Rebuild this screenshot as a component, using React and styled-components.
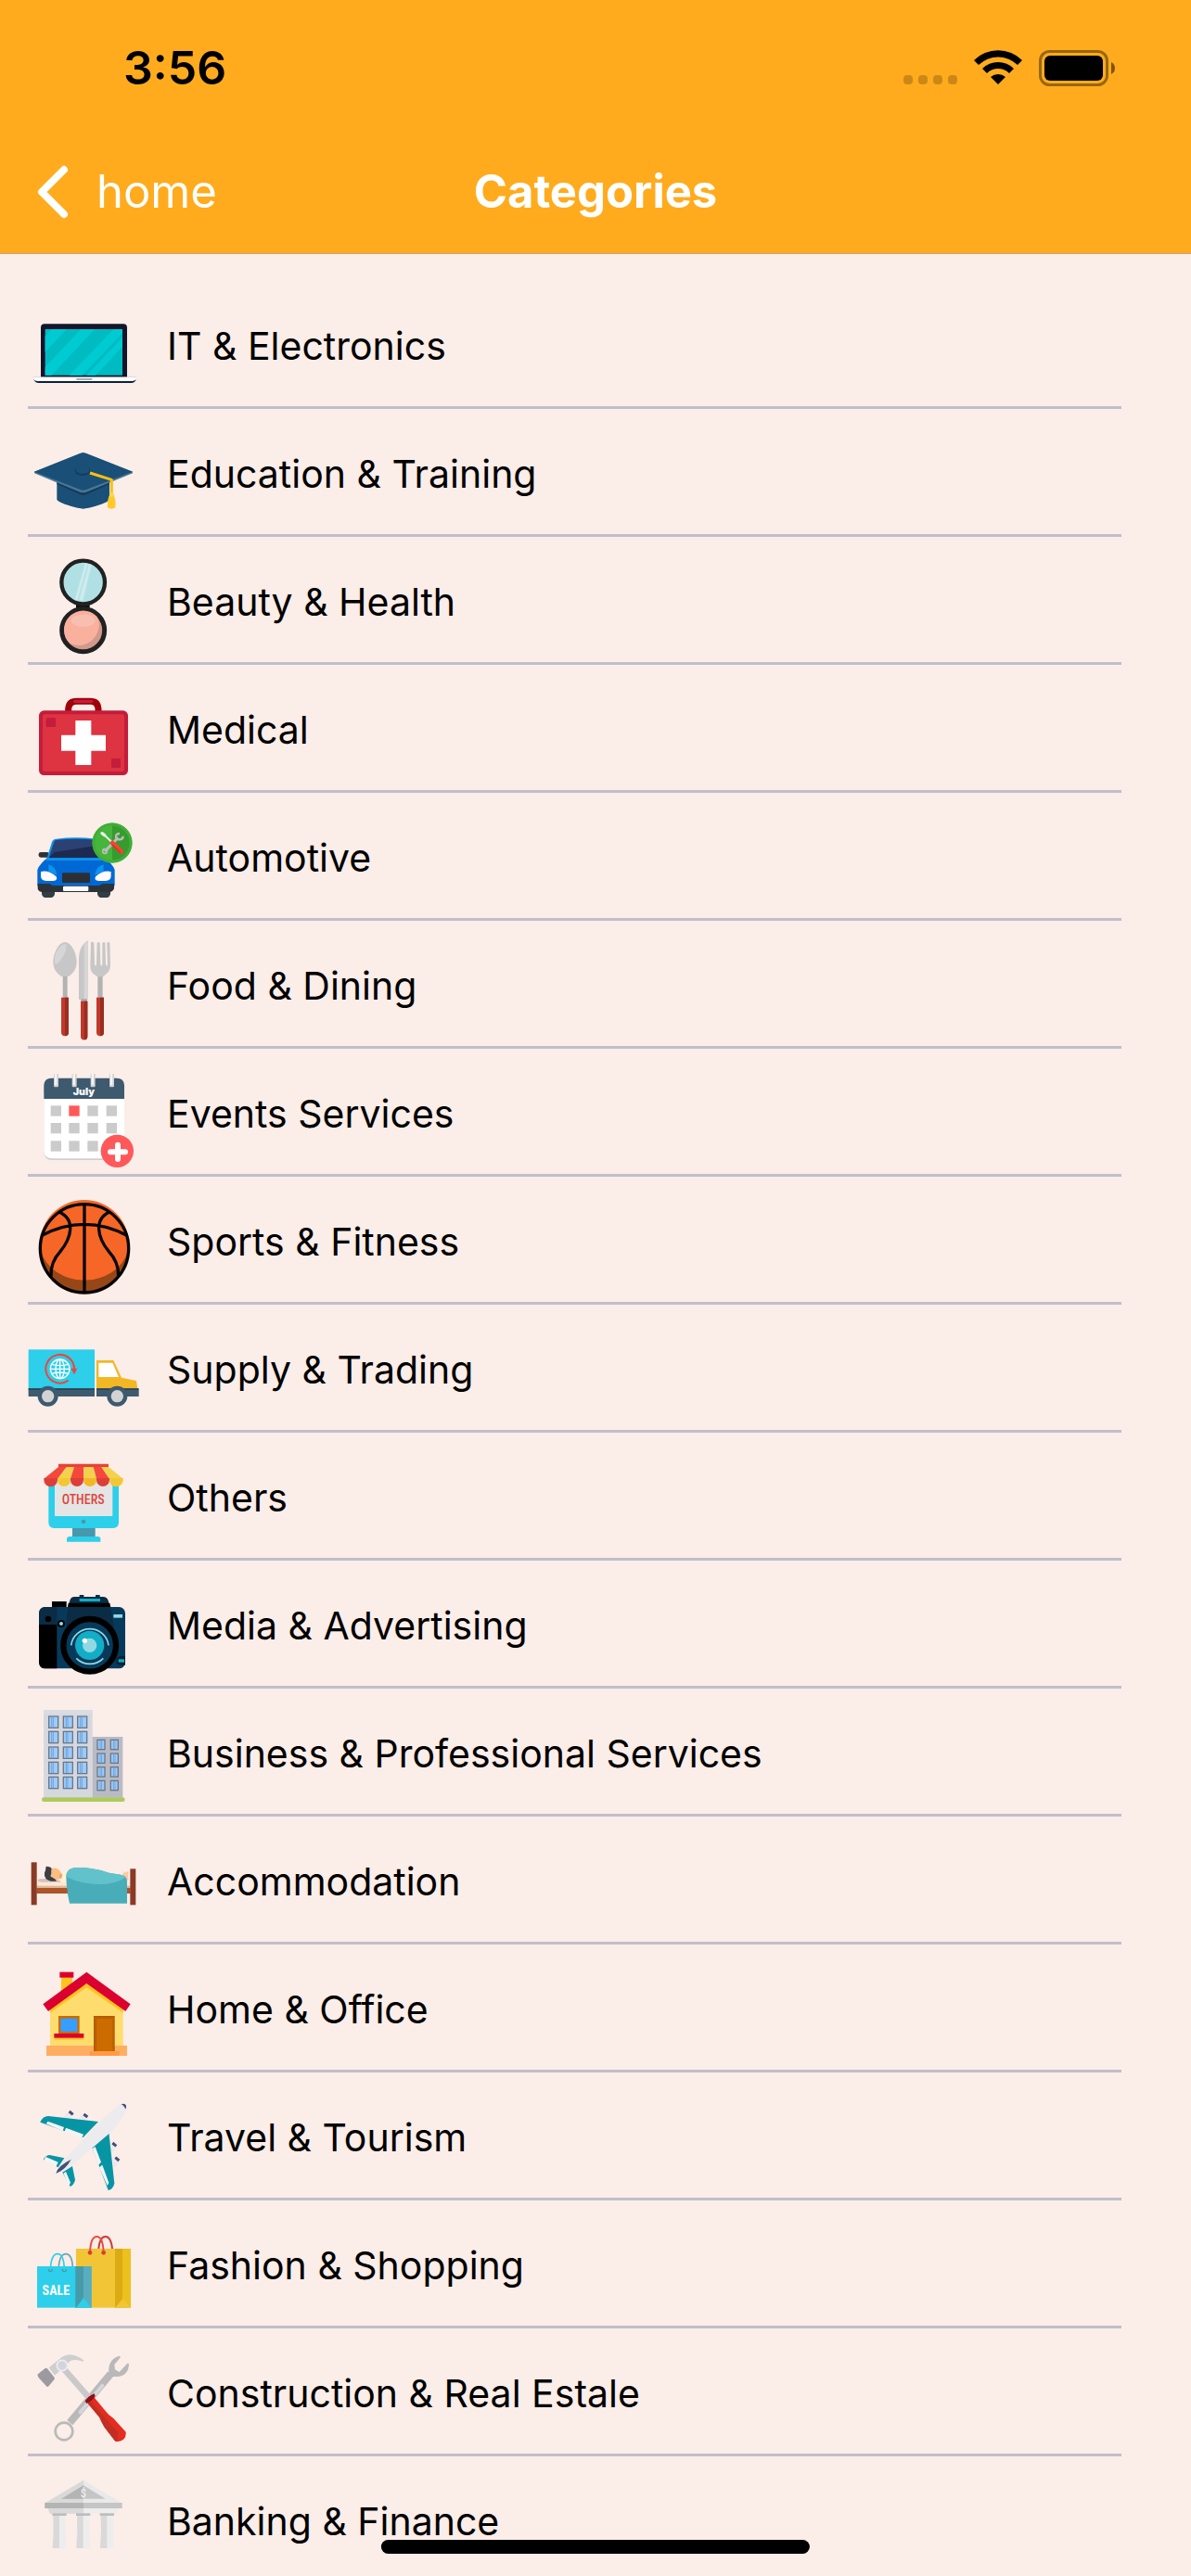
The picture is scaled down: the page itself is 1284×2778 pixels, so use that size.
import React from 'react';
import styled, { createGlobalStyle } from 'styled-components';

function LaptopIcon() {
  return (
    <Icon viewBox="90 -6 360 360">
      <path d="M132 262V100q0-12 12-12h255q12 0 12 12v162z" fill="#15142b" />
      <rect x="146" y="105" width="250" height="149" fill="#00bcc2" />
      <path d="M166 105h49l-69 74v-51zM262 105h44L167 254h-21v-26zM368 105h28v13L266 254h-42zM396 132v29l-87 93h-29z" fill="#00cbd3" />
      <path d="M109 268q4 11 17 11h298q13 0 16-11z" fill="#0b2238" />
      <path d="M109 260h331v7q-4 6-14 6H122q-10 0-13-6z" fill="#fff" />
      <path d="M109 260h331" stroke="#c5ccd2" strokeWidth="2" />
      <rect x="247" y="264" width="51" height="6" fill="#a3b3b6" />
    </Icon>
  );
}

function GraduationIcon() {
  return (
    <Icon viewBox="90 408 360 360">
      <path d="M184 596v60q4 8 40 20 32 10 45 10t45-10q36-12 40-20v-60z" fill="#1a4f77" />
      <path d="M184 596v10l76 34q9 4 18 0l76-34v-10z" fill="#123a57" />
      <path d="M111 566l148-59q10-5 20 0l150 59v5l-150 61q-10 4-20 0l-148-61z" fill="#4a7696" />
      <path d="M111 566l148-59q10-5 20 0l150 59-150 58q-10 4-20 0z" fill="#1a4f77" />
      <ellipse cx="267" cy="563" rx="25" ry="15" fill="#123a57" />
      <ellipse cx="267" cy="560" rx="23" ry="13" fill="#1a4f77" />
      <path d="M291 570l70 22v48" fill="none" stroke="#fdc010" strokeWidth="9" strokeLinejoin="round" />
      <path d="M355 638h12q8 20 6 44-12 8-25 0-2-24 7-44z" fill="#ffca28" />
      <circle cx="361" cy="641" r="7" fill="#ffd54f" />
    </Icon>
  );
}

function CompactIcon() {
  return (
    <Icon viewBox="90 12 360 360">
      <rect x="246" y="176" width="44" height="30" fill="#111" />
      <circle cx="269" cy="114" r="70" fill="#b0e0e4" stroke="#212121" strokeWidth="13" />
      <path d="M276 52l20 6-28 116-26-4z" fill="#cdebed" />
      <path d="M285 56l-32 116" stroke="#b0e0e4" strokeWidth="4" />
      <circle cx="269" cy="269" r="69" fill="#d09a8c" stroke="#212121" strokeWidth="15" />
      <path d="M207 268a62 62 0 0 1 106-44q14 20 4 48-14 38-54 46-24 2-38-8-18-18-18-42z" fill="#f9b09d" />
      <ellipse cx="269" cy="238" rx="39" ry="20" fill="#f8bfb0" />
    </Icon>
  );
}

function FirstAidIcon() {
  return (
    <Icon viewBox="90 426 360 360">
      <path d="M221 532v-8q2-25 26-25h46q23 0 25 25v8" fill="none" stroke="#a00007" strokeWidth="21" />
      <rect x="237" y="494" width="64" height="10" rx="5" fill="#c41c3b" />
      <rect x="126" y="529" width="288" height="209" rx="16" fill="#c41c3b" />
      <rect x="138" y="541" width="264" height="185" rx="8" fill="#de3341" />
      <rect x="149" y="552" width="31" height="30" rx="4" fill="#c41c3b" />
      <rect x="360" y="684" width="30" height="30" rx="4" fill="#c41c3b" />
      <path d="M244 561h51v47h47v51h-47v46h-51v-46h-46v-51h46z" fill="#fff" />
    </Icon>
  );
}

function CarIcon() {
  return (
    <Icon viewBox="90 30 360 360">
      <rect x="125" y="177" width="34" height="17" rx="7" fill="#2b3338" />
      <path d="M135 298h42v15q-3 11-12 11h-18q-9 0-12-11zM315 298h42v15q-3 11-12 11h-18q-9 0-12-11z" fill="#343c44" />
      <path d="M150 202l18-58q3-9 14-10 64-8 128 0 11 1 14 10l18 58z" fill="#0a94ee" />
      <path d="M158 195l17-52q1-5 9-6 62-6 124 0 8 1 9 6l17 52z" fill="#2c4173" />
      <path d="M158 195l18-18 140-22 18 40z" fill="#1d2a50" />
      <path d="M153 196h186q24 18 32 38v52H121v-52q8-20 32-38z" fill="#0068d4" />
      <path d="M153 196h186l8 8H145z" fill="#0a94ee" />
      <path d="M157 217q24 6 27 34l-27-12zM335 217q-24 6-29 34l29-10z" fill="#0a94ee" />
      <path d="M132 240q26-6 50 16 6 13-10 14h-22q-18-2-18-16zM359 240q-26-6-50 16-6 13 10 14h22q18-2 18-16z" fill="#fffaff" />
      <rect x="201" y="244" width="90" height="32" rx="4" fill="#2b2f33" />
      <path d="M122 279h38q8 6 14 6h144q6 0 14-6h37v16q-4 11-16 11H138q-14 0-16-11z" fill="#2b3338" />
      <rect x="204" y="287" width="82" height="16" rx="3" fill="#fffaff" />
      <circle cx="363" cy="147" r="65" fill="#45b53c" />
      <path d="M363 91a56 56 0 0 1 0 112z" fill="#379b2f" />
      <circle cx="363" cy="147" r="60" fill="none" stroke="#3fae36" strokeWidth="8" />
      <path d="M339 175l43-45" stroke="#bdbdbd" strokeWidth="9" />
      <circle cx="339" cy="174" r="7" fill="none" stroke="#bdbdbd" strokeWidth="5" />
      <path d="M387 117q-13 0-12 11 2 9 13 8 10-1 10-11" fill="none" stroke="#bdbdbd" strokeWidth="7" />
      <path d="M331 117l6 4 28 27" fill="none" stroke="#eee" strokeWidth="6" strokeLinecap="round" />
      <path d="M330 116l8 6" stroke="#eee" strokeWidth="10" strokeLinecap="round" />
      <path d="M363 147l30 29" stroke="#ff4236" strokeWidth="14" strokeLinecap="round" />
      <path d="M363 153l26 25" stroke="#d62e22" strokeWidth="4" strokeLinecap="round" />
    </Icon>
  );
}

function CutleryIcon() {
  return (
    <Icon viewBox="90 444 360 360">
      <rect x="203" y="570" width="15" height="82" fill="#b3b3b3" />
      <path d="M210 468c20 0 38 36 38 64 0 26-14 38-26 47h-24c-12-9-26-21-26-47 0-28 18-64 38-64z" fill="#c7c7c7" />
      <path d="M212 474c8 12-8 54-32 66-12-24 10-64 32-66z" fill="#d6d6d6" />
      <path d="M255 654V520q2-44 30-57v191z" fill="#c7c7c7" />
      <path d="M272 654V474q6-7 13-11v191z" fill="#d6d6d6" />
      <rect x="262" y="652" width="20" height="8" fill="#a8a8a8" />
      <rect x="316" y="570" width="16" height="82" fill="#b3b3b3" />
      <path d="M294 468q8-3 10 3l2 70q3 8 6 0l2-70q5-6 9 0l2 70q3 8 6 0v-70q5-6 9 0l2 70q3 8 6 0l-2-70q4-6 9-1l2 75q-2 18-16 28l-8 7h-18l-9-7q-14-8-14-28z" fill="#c7c7c7" />
      <path d="M198 647h24v113q0 12-12 12t-12-12zM312 647h24v113q0 12-12 12t-12-12zM261 659h22v114q0 11-11 11t-11-11z" fill="#c0392b" />
      <path d="M210 647h12v113q0 12-12 12zM324 647h12v113q0 12-12 12zM272 659h11v114q0 11-11 11z" fill="#992d22" />
    </Icon>
  );
}

function CalendarIcon() {
  const columns = [164, 223, 283, 344];
  const rows = [187, 243, 301];
  return (
    <Icon viewBox="90 48 360 360">
      <rect x="142" y="110" width="260" height="253" rx="24" fill="#cfcfcf" />
      <path d="M142 150h260v186q-2 22-24 22H168q-24 0-26-22z" fill="#fff" />
      <path d="M142 165v-45q2-22 24-22h212q22 0 24 22v45z" fill="#3d5a6f" />
      {columns.map((x) => (
        <g key={x}>
          <rect x={x + 10} y="84" width="15" height="43" rx="3" fill="#d0d0d0" />
          <rect x={x + 13} y="84" width="7" height="37" fill="#f5f5f5" />
        </g>
      ))}
      <MonthText x="271" y="154">July</MonthText>
      {rows.map((y) =>
        columns.map((x) => (
          <rect key={x + '-' + y} x={x} y={y} width="34" height="34" fill={x === 223 && y === 187 ? '#ff585b' : '#cbcbcb'} />
        ))
      )}
      <circle cx="379" cy="334" r="53" fill="#ff585b" />
      <path d="M381 314v46M357 337h48" stroke="#fff" strokeWidth="18" strokeLinecap="round" />
    </Icon>
  );
}

function BasketballIcon() {
  return (
    <Icon viewBox="90 462 360 360">
      <circle cx="273" cy="649" r="144" fill="#964718" />
      <path d="M129 636a144 144 0 0 1 288 0q-4 54-54 89-44 28-90 26-46 2-90-26-50-35-54-89z" fill="#f66626" />
      <g fill="none" stroke="#060402" strokeWidth="10">
        <circle cx="273" cy="649" r="143" />
        <path d="M273 507v284M136 607q66-36 137-36t137 36M190 530q40 18 37 58-2 34-32 71-32 34-30 80M355 530q-38 18-35 58 2 34 32 71 32 34 31 80" />
      </g>
    </Icon>
  );
}

function TruckIcon() {
  return (
    <Icon viewBox="90 36 360 360">
      <rect x="92" y="136" width="214" height="128" fill="#2dcfea" />
      <rect x="92" y="262" width="214" height="26" fill="#3d5a6f" />
      <path d="M312 171h55l26 56 48 10 4 26H312z" fill="#f3b724" />
      <path d="M319 179h45l20 46h-65z" fill="#fff" />
      <rect x="312" y="262" width="137" height="26" fill="#3d5a6f" />
      <path d="M92 262h214v5H92zM312 262h136v5H312z" fill="#2c4355" />
      <circle cx="155" cy="287" r="33" fill="#3d5a6f" />
      <circle cx="379" cy="287" r="33" fill="#3d5a6f" />
      <circle cx="155" cy="287" r="20" fill="#d3d3d3" />
      <circle cx="379" cy="287" r="20" fill="#d3d3d3" />
      <path d="M221 236a46 46 0 1 1 19-37" fill="none" stroke="#ea483c" strokeWidth="6" />
      <path d="M229 197h21l-10 20z" fill="#ea483c" />
      <g fill="none" stroke="#fff" strokeWidth="4">
        <circle cx="194" cy="199" r="31" />
        <ellipse cx="194" cy="199" rx="14" ry="31" />
        <path d="M163 199h62M168 184q26 8 52 0M168 214q26-8 52 0M194 168v62" />
      </g>
    </Icon>
  );
}

function OthersIcon() {
  return (
    <Icon viewBox="90 450 360 360">
      <path d="M157 560h227v137q-2 17-18 17H175q-16 0-18-17z" fill="#2dcfea" />
      <rect x="177" y="560" width="187" height="115" fill="#e5e5e5" />
      <circle cx="270" cy="693" r="7" fill="#4797ad" />
      <rect x="234" y="714" width="74" height="28" fill="#4797ad" />
      <path d="M216 758v-9q1-8 9-8h91q9 0 9 8v9z" fill="#2dcfea" />
      <path d="M189 506h162v12H189z" fill="#ea4035" />
      <path d="M189 516h26l-27 38h-46z" fill="#f4483d" />
      <path d="M215 516h25l-10 38h-44z" fill="#f3d14e" />
      <path d="M240 516h31v38h-43z" fill="#f4483d" />
      <path d="M271 516h31l10 38h-41z" fill="#f3d14e" />
      <path d="M302 516h26l26 38h-42z" fill="#f4483d" />
      <path d="M328 516h23l47 38h-44z" fill="#f3d14e" />
      <path d="M142 552h44v6a22 22 0 0 1-44 0zM228 552h42v6a21 21 0 0 1-42 0zM312 552h42v6a21 21 0 0 1-42 0z" fill="#dd3f38" />
      <path d="M186 552h42v6a21 21 0 0 1-42 0zM354 552h44v6a22 22 0 0 1-44 0z" fill="#f3c733" />
      <path d="M270 552h42v6a21 21 0 0 1-42 0z" fill="#f5b623" />
      <IconText x="269" y="637" fontSize="42" fontWeight="500" fill="#e0453c">OTHERS</IconText>
    </Icon>
  );
}

function CameraIcon() {
  return (
    <Icon viewBox="90 24 360 360">
      <rect x="168" y="111" width="47" height="24" fill="#000" />
      <path d="M220 130l6-22q3-12 15-12h92q13 0 17 12l6 22z" fill="#0a2c44" />
      <path d="M221 116h134l3 14H219z" fill="#000" />
      <path d="M257 96v-6h14v6zM309 96v-6h14v6z" fill="#0a2c44" />
      <rect x="257" y="102" width="67" height="9" fill="#12adc6" />
      <rect x="126" y="129" width="279" height="199" rx="20" fill="#073a5a" />
      <path d="M126 186v-37q2-20 20-20h38v57z" fill="#0a2c44" />
      <path d="M126 186h58v142h-38q-18 0-20-20z" fill="#000" />
      <path d="M220 129h137l12 70-80 40-76-50z" fill="#0a2c44" />
      <circle cx="156" cy="168" r="10" fill="#000" />
      <circle cx="198" cy="183" r="12" fill="#000" />
      <circle cx="198" cy="183" r="6" fill="#90d9e3" />
      <rect x="367" y="153" width="29" height="11" fill="#90d9e3" />
      <path d="M376 303q0-14 14-14h15v28h-15q-14 0-14-14z" fill="#05202f" />
      <rect x="383" y="298" width="19" height="10" fill="#12adc6" />
      <circle cx="290" cy="253" r="85" fill="#073a5a" stroke="#000" strokeWidth="19" />
      <circle cx="290" cy="253" r="47" fill="#12adc6" />
      <circle cx="290" cy="253" r="23" fill="#90d9e3" />
      <circle cx="274" cy="238" r="8" fill="#fff" />
      <path d="M230 253a61 61 0 0 1 121 0M247 295a61 61 0 0 0 87 0" fill="none" stroke="#90d9e3" strokeWidth="5" />
    </Icon>
  );
}

function BuildingWindow({ x, y, width, height }) {
  return (
    <g>
      <rect x={x + 1} y={y + 1} width={width - 2} height={height - 2} fill="#99ccff" stroke="#6d7787" strokeWidth="4" />
      <path d={`M${x + 10} ${y + 3}v${height - 6}M${x + 15} ${y + 3}v${height - 6}`} stroke="#78a2cf" strokeWidth="3" />
    </g>
  );
}

function BuildingIcon() {
  return (
    <Icon viewBox="90 438 360 360">
      <rect x="141" y="462" width="158" height="284" fill="#d6d8df" />
      <rect x="141" y="462" width="158" height="13" fill="#d9dde2" />
      <rect x="299" y="549" width="98" height="197" fill="#b9bbc4" />
      {[482, 531, 581, 630, 678].map((y) =>
        [157, 204, 250].map((x) => <BuildingWindow key={x + '-' + y} x={x} y={y} width={32} height={39} />)
      )}
      {[558, 602, 646, 690].map((y) =>
        [314, 357].map((x) => <BuildingWindow key={x + '-' + y} x={x} y={y} width={26} height={33} />)
      )}
      <rect x="135" y="745" width="269" height="14" rx="7" fill="#accb5c" />
    </Icon>
  );
}

function BedIcon() {
  return (
    <Icon viewBox="90 42 360 360">
      <rect x="118" y="208" width="304" height="22" fill="#ffe8d3" />
      <rect x="118" y="221" width="304" height="7" fill="#ddb99c" />
      <rect x="118" y="228" width="304" height="18" fill="#ad5429" />
      <path d="M121 203q2-5 12-5h46l24 11h-70q-10 0-12-6z" fill="#d8bfc0" />
      <path d="M200 176l20-2v36h-24z" fill="#fff3d6" />
      <path d="M166 166q20-8 32 14l4 4-3 12-10 4q-14 2-24-4z" fill="#fdbd83" />
      <path d="M192 184l9-1-2 14-7-2z" fill="#f4a169" />
      <path d="M149 158q16 0 18 8-2 8-1 16-6 10 4 12 10 4 13 12h-18q-24-6-21-27 4-8 5-21z" fill="#3b3e42" />
      <path d="M396 190l4-16 4 6 8-6 4 2-2 12 2 14-10 4z" fill="#fdc99a" />
      <path d="M214 190q2-24 26-27 50-4 112 16l38 6q20 4 21 20v73H225q-10-42-11-88z" fill="#48adb9" />
      <path d="M214 190q2-24 26-27 50-4 112 16l38 6q12 2 17 8-38 28-106 22-56-6-85-24z" fill="#62c2cb" />
      <rect x="101" y="145" width="18" height="138" fill="#8a3a26" />
      <rect x="421" y="166" width="18" height="117" fill="#8a3a26" />
    </Icon>
  );
}

function HouseIcon() {
  return (
    <Icon viewBox="90 456 360 360">
      <rect x="198" y="514" width="36" height="60" fill="#ffc31f" />
      <rect x="193" y="500" width="45" height="18" fill="#dc0030" />
      <path d="M162 740V618l118-88 118 88v122z" fill="#ffdc6e" />
      <path d="M162 618l118-82 118 82v14l-118-82-118 82z" fill="#ffc31f" />
      <path d="M139 604l141-104 142 104-16 23-126-90-124 90z" fill="#dc0030" />
      <rect x="150" y="738" width="261" height="33" fill="#ffae61" />
      <rect x="189" y="642" width="68" height="60" fill="#cc6b00" />
      <rect x="196" y="650" width="54" height="43" fill="#369eff" />
      <rect x="176" y="712" width="95" height="7" fill="#ffc31f" />
      <rect x="175" y="699" width="96" height="14" fill="#dc0030" />
      <rect x="303" y="642" width="68" height="114" fill="#a85600" />
      <path d="M305 644h64v112h-5V650h-54v106h-5z" fill="#bd6200" />
      <rect x="311" y="651" width="53" height="105" fill="#cc6b00" />
      <rect x="290" y="756" width="96" height="15" fill="#ff9a44" />
    </Icon>
  );
}

function PlaneIcon() {
  return (
    <Icon viewBox="90 60 360 360">
      <path d="M206 160l14-16 16 6-12 18zM254 164l14-14 14 6-10 16zM362 242l14 10-10 22-10-6zM370 290l14 10-10 22-10-6z" fill="#e9e9ee" />
      <path d="M224 141l12 10M271 150l12 9M364 243l12 10M373 290l12 10" stroke="#444f78" strokeWidth="9" />
      <path d="M130 176q8-20 26-20l162 18-50 52z" fill="#0795a4" />
      <path d="M352 208l18 166q-4 18-20 22l-52-138z" fill="#0795a4" />
      <path d="M140 298q6-14 20-16l48 10-20 30zM234 318l9 45q-4 16-16 21l-25-46z" fill="#0795a4" />
      <path d="M155 173l52 19-4 12-54-23zM213 194l57 21-6 13-55-22zM299 261l9-6 19 50-9 10zM321 322l10-8 21 58-5 9zM148 288l40 17-7 15-40-20zM205 341l8-5 15 35-5 11z" fill="#f4f4f4" />
      <path d="M182 342q4-20 26-44L336 162l44-38q14-10 24-4 8 12-2 32l-36 50-134 114q-30 24-50 26z" fill="#ececee" />
      <path d="M391 118q10-4 16 2 4 8-1 14-6-14-15-16z" fill="#444f78" />
      <path d="M181 342q4-24 49-46-16 32-49 46z" fill="#444f78" />
    </Icon>
  );
}

function ShoppingIcon() {
  return (
    <Icon viewBox="90 474 360 360">
      <path d="M319 585q4-39 22-39t22 39" fill="none" stroke="#ce3a35" strokeWidth="6" />
      <rect x="246" y="585" width="177" height="191" fill="#f1c536" />
      <rect x="372" y="585" width="25" height="191" fill="#daab13" />
      <rect x="397" y="585" width="26" height="191" fill="#edc11d" />
      <path d="M372 776l25-30 26 30z" fill="#f1c536" />
      <path d="M291 598q2-52 22-52t22 52" fill="none" stroke="#e94d40" strokeWidth="6" />
      <circle cx="291" cy="598" r="7" fill="#d93d36" />
      <circle cx="335" cy="598" r="7" fill="#d93d36" />
      <path d="M190 642q4-40 23-40t22 40" fill="none" stroke="#6ba8b3" strokeWidth="5" />
      <rect x="120" y="642" width="176" height="134" fill="#2dcfea" />
      <rect x="244" y="642" width="26" height="134" fill="#479aa7" />
      <rect x="270" y="642" width="26" height="134" fill="#58aebf" />
      <path d="M246 776l24-32 25 32z" fill="#2dcfea" />
      <path d="M163 654q2-52 23-52t22 52" fill="none" stroke="#2dcfea" strokeWidth="5" />
      <path d="M157 651q0 8 6 8t6-8M202 651q0 8 6 8t7-8" fill="none" stroke="#479aa7" strokeWidth="4" />
      <IconText x="181" y="734" fontSize="42" fontWeight="700" fill="#fff">SALE</IconText>
    </Icon>
  );
}

function ToolsIcon() {
  return (
    <Icon viewBox="90 78 360 360">
      <path d="M226 338L358 180" stroke="#b9b9b9" strokeWidth="24" />
      <path d="M260 304l71-86" stroke="#d5d6dc" strokeWidth="12" strokeLinecap="round" />
      <circle cx="207" cy="366" r="28" fill="none" stroke="#b9b9b9" strokeWidth="8" />
      <path d="M352 178q-4-46 34-56l4 4-20 24 2 16 14 8 26-28 5 1q-1 38-35 42l-16 0-16 6z" fill="#b9b9b9" />
      <path d="M203 160l84 96" stroke="#c9c9c9" strokeWidth="20" />
      <path d="M158 160l42-34q30-20 71 10-2 6-8 3-30-10-42 6l-44 40z" fill="#cfcfcf" />
      <path d="M121 182l25-20q4-2 7 1l23 29q2 4-1 7l-19 22q-3 2-6-1l-26-29z" fill="#9c9aa0" />
      <circle cx="201" cy="153" r="17" fill="#d3d4dc" stroke="#eceef5" strokeWidth="5" />
      <path d="M283 274l20-20 38 46q10 14 26 24l40 44q2 16-10 26-12 8-24 4l-34-44q-8-14-16-32z" fill="#e42c20" />
      <path d="M284 276l8-8 90 102-3 28-8-2-34-44q-8-14-16-32z" fill="#c12f22" />
      <path d="M275 268q10-16 30-24l3 8q-10 16-28 24z" fill="#8e1018" />
    </Icon>
  );
}

function BankIcon() {
  return (
    <Icon viewBox="90 492 360 360">
      <path d="M270 524L146 598h248z" fill="#e9e9e9" />
      <path d="M270 524L146 598h124z" fill="#d9d9d9" />
      <path d="M270 541l-71 43h142z" fill="#c5c5c5" />
      <path d="M270 541l-71 43h71z" fill="#b4b4b4" />
      <rect x="145" y="597" width="250" height="18" fill="#c5c5c5" />
      <rect x="145" y="597" width="125" height="18" fill="#b4b4b4" />
      <path d="M155 615h230l-6 17H161z" fill="#ededed" />
      <path d="M155 615h115v17H161z" fill="#dadada" />
      {[170, 247, 324].map((x) => (
        <g key={x}>
          <path d={`M${x + 2} 636h40q-3 54 3 108h-45q5-54 2-108z`} fill="#ededed" />
          <path d={`M${x + 2} 636h20v108h-22q5-54 2-108z`} fill="#d9d9d9" />
          <rect x={x - 1} y="631" width="46" height="8" fill="#bcbcbc" />
        </g>
      ))}
      <IconText x="270" y="579" fontSize="38" fontWeight="500" fill="#f1f1f1">$</IconText>
    </Icon>
  );
}

const categories = [
  { name: 'IT & Electronics', icon: LaptopIcon },
  { name: 'Education & Training', icon: GraduationIcon },
  { name: 'Beauty & Health', icon: CompactIcon },
  { name: 'Medical', icon: FirstAidIcon },
  { name: 'Automotive', icon: CarIcon },
  { name: 'Food & Dining', icon: CutleryIcon },
  { name: 'Events Services', icon: CalendarIcon },
  { name: 'Sports & Fitness', icon: BasketballIcon },
  { name: 'Supply & Trading', icon: TruckIcon },
  { name: 'Others', icon: OthersIcon },
  { name: 'Media & Advertising', icon: CameraIcon },
  { name: 'Business & Professional Services', icon: BuildingIcon },
  { name: 'Accommodation', icon: BedIcon },
  { name: 'Home & Office', icon: HouseIcon },
  { name: 'Travel & Tourism', icon: PlaneIcon },
  { name: 'Fashion & Shopping', icon: ShoppingIcon },
  { name: 'Construction & Real Estale', icon: ToolsIcon },
  { name: 'Banking & Finance', icon: BankIcon },
];

function StatusBar() {
  return (
    <Status>
      <Time>3:56</Time>
      <Indicators>
        <Signal>
          <Dot />
          <Dot />
          <Dot />
          <Dot />
        </Signal>
        <svg width="52" height="38" viewBox="0 0 52 38">
          <path d="M0 11a37 37 0 0 1 52 0l-5 5a30 30 0 0 0-42 0z" />
          <path d="M9 20a24 24 0 0 1 34 0l-5 5a17 17 0 0 0-24 0z" />
          <path d="M18 29a12 12 0 0 1 16 0l-8 8z" />
        </svg>
        <svg width="83" height="39" viewBox="0 0 166 78">
          <rect x="3" y="3" width="144" height="72" rx="20" fill="none" stroke="#000" strokeOpacity="0.4" strokeWidth="6" />
          <rect x="12" y="12" width="126" height="54" rx="12" />
          <path d="M156 26q8 4 8 13t-8 13z" fillOpacity="0.5" />
        </svg>
      </Indicators>
    </Status>
  );
}

function App() {
  return (
    <Screen>
      <GlobalStyle />
      <Header>
        <StatusBar />
        <NavBar>
          <BackButton type="button">
            <svg width="34" height="58" viewBox="0 0 34 58" aria-hidden="true">
              <path d="M29 5L5 29l24 24" fill="none" stroke="#fff" strokeWidth="8" strokeLinecap="round" strokeLinejoin="round" />
            </svg>
            home
          </BackButton>
          <Title>Categories</Title>
        </NavBar>
      </Header>
      <List>
        {categories.map(({ name, icon: CategoryIcon }) => (
          <Item key={name}>
            <Row type="button">
              <CategoryIcon />
              <Label>{name}</Label>
            </Row>
          </Item>
        ))}
      </List>
      <HomeIndicator />
    </Screen>
  );
}

const GlobalStyle = createGlobalStyle`
  * {
    box-sizing: border-box;
  }
  body {
    margin: 0;
    background-color: #fbede8;
    font-family: Inter, Roboto, sans-serif;
  }
  button {
    border: none;
    background: none;
    font-family: inherit;
    cursor: pointer;
  }
`;

const Screen = styled.div`
  display: flex;
  flex-direction: column;
  height: 100vh;
  background-color: #fbede8;
`;

const Header = styled.header`
  flex-shrink: 0;
  background-color: #ffab1d;
  border-bottom: 1px solid #b9a795;
`;

const Status = styled.div`
  display: flex;
  justify-content: space-between;
  align-items: center;
  height: 146px;
  padding: 0 81px 0 133px;
`;

const Time = styled.span`
  font-size: 50px;
  line-height: 60px;
  font-weight: 600;
  color: #000;
`;

const Indicators = styled.div`
  display: flex;
  align-items: center;
  gap: 18px;
`;

const Signal = styled.div`
  display: flex;
  align-self: flex-end;
  gap: 6px;
  padding-bottom: 2px;
`;

const Dot = styled.span`
  width: 10px;
  height: 10px;
  border-radius: 4px;
  background-color: rgba(0, 0, 0, 0.2);
`;

const NavBar = styled.nav`
  display: grid;
  grid-template-columns: 1fr auto 1fr;
  align-items: center;
  height: 127px;
  padding: 0 40px 5px;
`;

const BackButton = styled.button`
  display: flex;
  align-items: center;
  justify-self: start;
  gap: 30px;
  padding: 0;
  font-size: 49px;
  line-height: 60px;
  color: #fff;
`;

const Title = styled.h1`
  margin: 0;
  font-size: 49px;
  line-height: 60px;
  font-weight: 700;
  color: #fff;
`;

const List = styled.ul`
  flex: 1;
  min-height: 0;
  margin: 0;
  padding: 29px 75px 0 30px;
  list-style: none;
  overflow-y: auto;
  scrollbar-width: none;
`;

const Item = styled.li`
  border-bottom: 3px solid #c0bfc9;
`;

const Row = styled.button`
  display: flex;
  align-items: flex-start;
  gap: 30px;
  width: 100%;
  padding: 15px 0 0;
  text-align: left;
`;

const Icon = styled.svg`
  flex-shrink: 0;
  width: 120px;
  height: 120px;
`;

const IconText = styled.text`
  font-family: 'Roboto Condensed', 'Liberation Sans Narrow', Roboto, sans-serif;
  text-anchor: middle;
`;

const MonthText = styled.text`
  font-size: 32px;
  font-weight: 900;
  text-anchor: middle;
  fill: #fff;
`;

const Label = styled.span`
  padding-top: 30px;
  font-size: 41px;
  line-height: 50px;
  color: #000;
`;

const HomeIndicator = styled.div`
  position: fixed;
  bottom: 24px;
  left: 50%;
  width: 36%;
  height: 15px;
  border-radius: 8px;
  background-color: #000;
  transform: translateX(-50%);
`;

export default App;
